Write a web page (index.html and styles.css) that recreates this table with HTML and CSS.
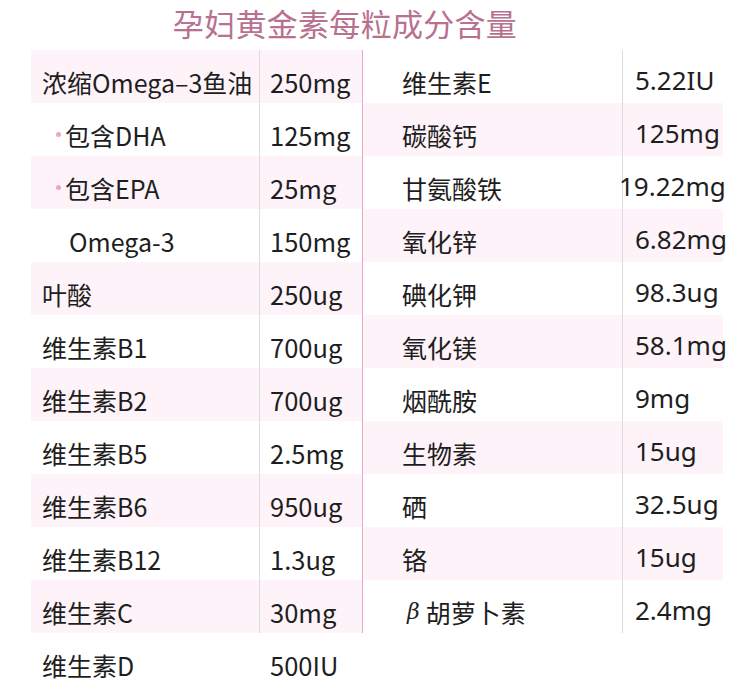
FILE: index.html
```html
<!DOCTYPE html>
<html lang="zh-CN">
<head>
<meta charset="utf-8">
<title>孕妇黄金素每粒成分含量</title>
<link rel="stylesheet" href="styles.css">
</head>
<body>
<div class="page">
  <h1 class="title">孕妇黄金素每粒成分含量</h1>
  <div class="tables">
    <div class="table left">
      <div class="cell name shade">浓缩Omega–3鱼油</div><div class="cell val shade">250mg</div>
      <div class="cell name sub"><span class="dot"></span>包含DHA</div><div class="cell val">125mg</div>
      <div class="cell name sub shade"><span class="dot"></span>包含EPA</div><div class="cell val shade">25mg</div>
      <div class="cell name omega">Omega-3</div><div class="cell val">150mg</div>
      <div class="cell name shade">叶酸</div><div class="cell val shade">250ug</div>
      <div class="cell name">维生素B1</div><div class="cell val">700ug</div>
      <div class="cell name shade">维生素B2</div><div class="cell val shade">700ug</div>
      <div class="cell name">维生素B5</div><div class="cell val">2.5mg</div>
      <div class="cell name shade">维生素B6</div><div class="cell val shade">950ug</div>
      <div class="cell name">维生素B12</div><div class="cell val">1.3ug</div>
      <div class="cell name shade">维生素C</div><div class="cell val shade">30mg</div>
      <div class="cell name">维生素D</div><div class="cell val last">500IU</div>
    </div>
    <div class="table right">
      <div class="cell name">维生素E</div><div class="cell val">5.22IU</div>
      <div class="cell name shade">碳酸钙</div><div class="cell val shade">125mg</div>
      <div class="cell name">甘氨酸铁</div><div class="cell val wide">19.22mg</div>
      <div class="cell name shade">氧化锌</div><div class="cell val shade">6.82mg</div>
      <div class="cell name">碘化钾</div><div class="cell val">98.3ug</div>
      <div class="cell name shade">氧化镁</div><div class="cell val shade">58.1mg</div>
      <div class="cell name">烟酰胺</div><div class="cell val">9mg</div>
      <div class="cell name shade">生物素</div><div class="cell val shade">15ug</div>
      <div class="cell name">硒</div><div class="cell val">32.5ug</div>
      <div class="cell name shade">铬</div><div class="cell val shade">15ug</div>
      <div class="cell name beta"><span class="greek">β</span>胡萝卜素</div><div class="cell val">2.4mg</div>
    </div>
  </div>
</div>
</body>
</html>
```

FILE: styles.css
```css
html, body {
  margin: 0;
  padding: 0;
  background: #ffffff;
}

body {
  font-family: "Noto Sans CJK SC", "Noto Sans", sans-serif;
  color: #1e1e1e;
  width: 750px;
  height: 686px;
  overflow: hidden;
}

.page {
  display: flex;
  flex-direction: column;
}

.title {
  margin: 0;
  height: 50px;
  line-height: 46px;
  font-size: 31px;
  font-weight: 400;
  color: #b8718f;
  text-align: center;
  padding-right: 60px;
  letter-spacing: 0.3px;
}

.tables {
  display: flex;
  align-items: flex-start;
  padding-left: 31px;
}

.table {
  display: grid;
  grid-auto-rows: 53px;
}

.table.left {
  grid-template-columns: 228px 103px;
}

.table.right {
  grid-template-columns: 259px 101px;
  border-left: 1px solid #e6aac8;
}

.cell {
  display: flex;
  align-items: center;
  padding-top: 10px;
  box-sizing: border-box;
  white-space: nowrap;
  font-size: 25px;
}

.shade {
  background: #fdf3f8;
}

.left .name {
  padding-left: 11px;
}

.left .val {
  border-left: 1px solid #dcdcdc;
  padding-left: 10px;
  font-size: 25.5px;
}

.left .val.last {
  border-left-color: transparent;
}

.left .sub {
  padding-left: 25px;
}

.dot {
  width: 5px;
  height: 5px;
  border-radius: 50%;
  background: #eaa6c6;
  margin-right: 4px;
}

.left .omega {
  padding-left: 38px;
}

.right .name {
  padding-left: 39px;
}

.right .beta {
  padding-left: 44px;
}

.greek {
  font-family: "DejaVu Serif", serif;
  font-style: italic;
  font-size: 22px;
  margin-right: 6px;
}

.right .val {
  border-left: 1px solid #dcdcdc;
  padding-left: 12px;
  font-family: "Noto Sans", sans-serif;
  font-size: 26px;
  padding-top: 6px;
}

.right .val.wide {
  padding-left: 0;
  margin-left: 0;
}

.right .val.wide {
  overflow: visible;
  text-indent: -4px;
}
```
